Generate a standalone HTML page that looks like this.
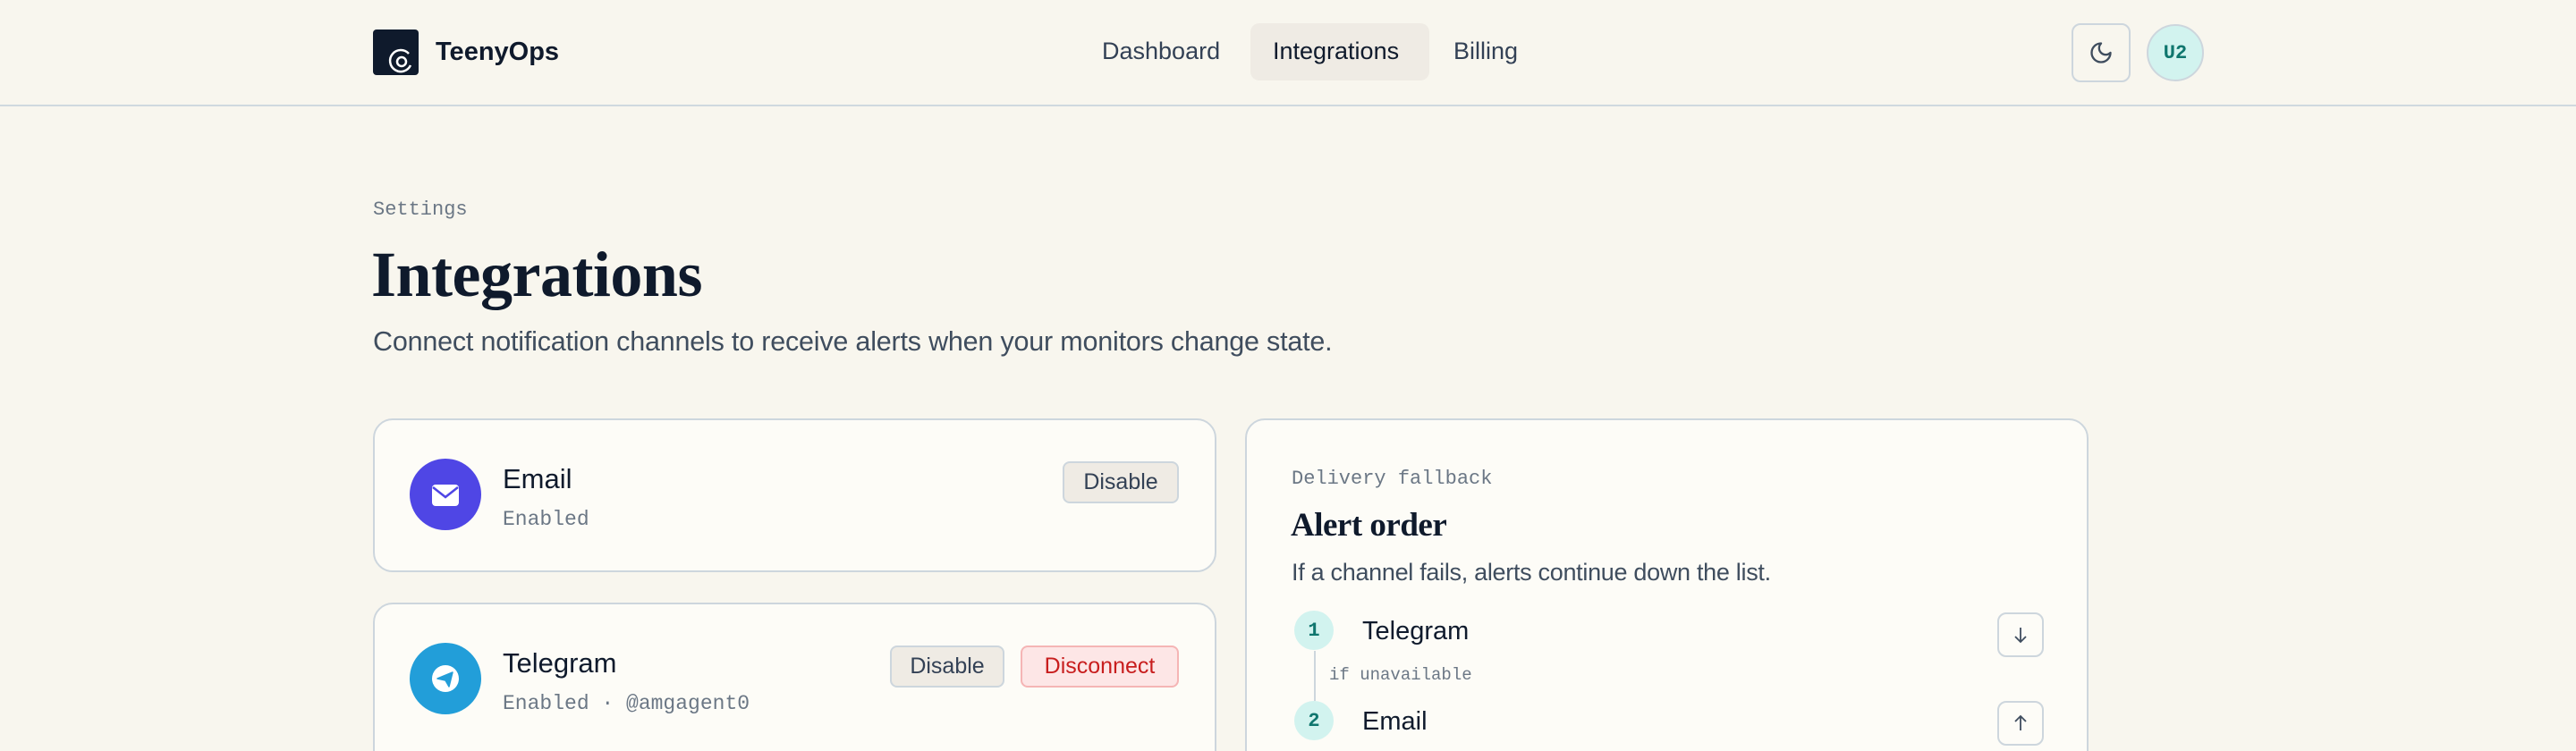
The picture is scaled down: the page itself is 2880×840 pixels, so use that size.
<!DOCTYPE html>
<html style="width:2880px;height:840px;overflow:hidden"><head><meta charset="utf-8"><style>
*{box-sizing:border-box;margin:0;padding:0}
body{width:2880px;height:840px;background:#f8f6ee;font-family:"Liberation Sans",sans-serif;color:#0f1a2c;position:relative;overflow:hidden}
.a{position:absolute;white-space:nowrap}
.mono{font-family:"Liberation Mono",monospace;color:#6b7785}
.card{position:absolute;background:#fdfcf7;border:2px solid #cdd6dd;border-radius:22px}
.btn{position:absolute;border:2px solid #cdd6dd;border-radius:8px;background:#efebe4;color:#334155;font-size:25px;display:flex;align-items:center;justify-content:center}
.num{position:absolute;width:44px;height:44px;border-radius:50%;background:#d2f3ef;color:#0f766e;font-family:"Liberation Mono",monospace;font-weight:bold;font-size:22px;display:flex;align-items:center;justify-content:center}
.arr{position:absolute;width:52px;height:50px;border:2px solid #cdd6dd;border-radius:10px;display:flex;align-items:center;justify-content:center}
</style></head><body>
<div class="a" style="left:0;top:117px;width:2880px;height:2px;background:#cfd9df"></div>
<div class="a" style="left:417px;top:33px;width:51px;height:51px;background:#0f1a2c;border-radius:4px">
<svg width="51" height="51" viewBox="0 0 51 51"><circle cx="32" cy="36" r="5" fill="none" stroke="#fff" stroke-width="2.5"/><path d="M40 27 A12 12 0 1 0 42 40" fill="none" stroke="#fff" stroke-width="2.5"/></svg></div>
<div class="a" style="left:487px;top:42px;font-size:29px;font-weight:bold">TeenyOps</div>
<div class="a" style="left:1232px;top:42px;font-size:27px;color:#334155">Dashboard</div>
<div class="a" style="left:1398px;top:26px;width:200px;height:64px;background:#efebe4;border-radius:10px"></div>
<div class="a" style="left:1423px;top:42px;font-size:27px;color:#0f1a2c">Integrations</div>
<div class="a" style="left:1625px;top:42px;font-size:27px;color:#334155">Billing</div>
<div class="a" style="left:2316px;top:26px;width:66px;height:66px;border:2px solid #cdd6dd;border-radius:10px;display:flex;align-items:center;justify-content:center">
<svg width="28" height="28" viewBox="0 0 24 24"><path d="M12 3a6 6 0 0 0 9 9 9 9 0 1 1-9-9z" fill="none" stroke="#3f4d5e" stroke-width="2" stroke-linejoin="round"/></svg></div>
<div class="a" style="left:2400px;top:27px;width:64px;height:64px;border-radius:50%;background:#d2f3ef;border:2px solid #cdd6dd;color:#0f766e;font-family:'Liberation Mono',monospace;font-weight:bold;font-size:22px;display:flex;align-items:center;justify-content:center">U2</div>

<div class="a mono" style="left:417px;top:222px;font-size:22px">Settings</div>
<div class="a" style="left:415px;top:266px;font-family:'Liberation Serif',serif;font-weight:bold;font-size:72px;letter-spacing:-0.5px">Integrations</div>
<div class="a" style="left:417px;top:365px;font-size:30.5px;color:#3f4d5e;letter-spacing:-0.2px">Connect notification channels to receive alerts when your monitors change state.</div>

<div class="card" style="left:417px;top:468px;width:943px;height:172px"></div>
<div class="a" style="left:458px;top:513px;width:80px;height:80px;border-radius:50%;background:#4f46e5"></div>
<svg class="a" style="left:478px;top:534px" width="40" height="40" viewBox="0 0 40 40"><rect x="5" y="8" width="30" height="24" rx="4" fill="#fff"/><path d="M6 11 L20 22 L34 11" fill="none" stroke="#4f46e5" stroke-width="2.5"/></svg>
<div class="a" style="left:562px;top:518px;font-size:31px">Email</div>
<div class="a mono" style="left:562px;top:568px;font-size:23px">Enabled</div>
<div class="btn" style="left:1188px;top:516px;width:130px;height:47px">Disable</div>

<div class="card" style="left:417px;top:674px;width:943px;height:200px"></div>
<div class="a" style="left:458px;top:719px;width:80px;height:80px;border-radius:50%;background:#229ed9"></div>
<svg class="a" style="left:478px;top:739px" width="40" height="40" viewBox="0 0 40 40"><circle cx="20" cy="20" r="15" fill="#fff"/><path d="M11 20 L28 13 L24 29 L20 22 Z M20 22 L28 13" fill="#229ed9" stroke="#229ed9" stroke-width="1.5" stroke-linejoin="round"/></svg>
<div class="a" style="left:562px;top:724px;font-size:31px">Telegram</div>
<div class="a mono" style="left:562px;top:774px;font-size:23px">Enabled · @amgagent0</div>
<div class="btn" style="left:995px;top:722px;width:128px;height:47px">Disable</div>
<div class="btn" style="left:1141px;top:722px;width:177px;height:47px;background:#fde6e6;border-color:#f5b5b5;color:#c81e1e">Disconnect</div>

<div class="card" style="left:1392px;top:468px;width:943px;height:420px"></div>
<div class="a mono" style="left:1444px;top:523px;font-size:22px">Delivery fallback</div>
<div class="a" style="left:1443px;top:566px;font-family:'Liberation Serif',serif;font-weight:bold;font-size:37px;letter-spacing:-0.5px">Alert order</div>
<div class="a" style="left:1444px;top:625px;font-size:27px;color:#3f4d5e;letter-spacing:-0.3px">If a channel fails, alerts continue down the list.</div>
<div class="a" style="left:1469px;top:728px;width:2px;height:56px;background:#cdd6dd"></div>
<div class="num" style="left:1447px;top:683px">1</div>
<div class="a" style="left:1523px;top:690px;font-size:29px">Telegram</div>
<div class="arr" style="left:2233px;top:685px"><svg width="20" height="24" viewBox="0 0 20 24"><path d="M10 4v16M4 14l6 6 6-6" fill="none" stroke="#3f4d5e" stroke-width="1.8"/></svg></div>
<div class="a mono" style="left:1486px;top:744px;font-size:19px">if unavailable</div>
<div class="num" style="left:1447px;top:784px">2</div>
<div class="a" style="left:1523px;top:791px;font-size:29px">Email</div>
<div class="arr" style="left:2233px;top:784px"><svg width="20" height="24" viewBox="0 0 20 24"><path d="M10 20V4M4 10l6-6 6 6" fill="none" stroke="#3f4d5e" stroke-width="1.8"/></svg></div>
</body></html>
